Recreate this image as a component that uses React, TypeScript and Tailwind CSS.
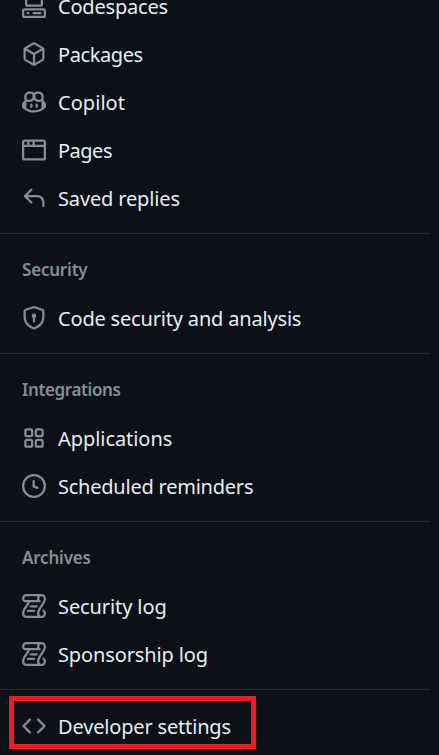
import React from "react";

const icons = {
  codespaces:
    "M0 11.25c0-.966.784-1.75 1.75-1.75h12.5c.966 0 1.75.784 1.75 1.75v3A1.75 1.75 0 0 1 14.25 16H1.75A1.75 1.75 0 0 1 0 14.25Zm2-9.5C2 .784 2.784 0 3.75 0h8.5C13.216 0 14 .784 14 1.75v5a1.75 1.75 0 0 1-1.75 1.75h-8.5A1.75 1.75 0 0 1 2 6.75Zm1.75-.25a.25.25 0 0 0-.25.25v5c0 .138.112.25.25.25h8.5a.25.25 0 0 0 .25-.25v-5a.25.25 0 0 0-.25-.25Zm-2 9.5a.25.25 0 0 0-.25.25v3c0 .138.112.25.25.25h12.5a.25.25 0 0 0 .25-.25v-3a.25.25 0 0 0-.25-.25ZM7 12.75a.75.75 0 0 1 .75-.75h4.5a.75.75 0 0 1 0 1.5h-4.5a.75.75 0 0 1-.75-.75Zm-4 0a.75.75 0 0 1 .75-.75h.5a.75.75 0 0 1 0 1.5h-.5a.75.75 0 0 1-.75-.75Z",
  package:
    "m8.878.392 5.25 3.045c.54.314.872.89.872 1.514v6.098a1.75 1.75 0 0 1-.872 1.514l-5.25 3.045a1.75 1.75 0 0 1-1.756 0l-5.25-3.045A1.75 1.75 0 0 1 1 11.049V4.951c0-.624.332-1.201.872-1.514L7.122.392a1.75 1.75 0 0 1 1.756 0ZM7.875 1.69l-4.63 2.685L8 7.133l4.755-2.758-4.63-2.685a.248.248 0 0 0-.25 0ZM2.5 5.677v5.372c0 .09.047.171.125.216l4.625 2.683V8.432Zm6.25 8.271 4.625-2.683a.25.25 0 0 0 .125-.216V5.677L8.75 8.432Z",
  copilot:
    "M7.998 15.035c-4.562 0-7.873-2.914-7.998-3.749V9.338c.085-.628.677-1.686 1.588-2.065.013-.07.024-.143.036-.218.029-.183.06-.384.126-.612-.201-.508-.254-1.084-.254-1.656 0-.87.128-1.769.693-2.484.579-.733 1.494-1.124 2.724-1.261 1.206-.134 2.262.034 2.944.765.05.053.096.108.139.165.044-.057.094-.112.143-.165.682-.731 1.738-.899 2.944-.765 1.23.137 2.145.528 2.724 1.261.566.715.693 1.614.693 2.484 0 .572-.053 1.148-.254 1.656.066.228.098.429.126.612.012.076.024.148.037.218.924.385 1.522 1.471 1.591 2.095v1.872c0 .766-3.351 3.795-8.002 3.795Zm0-1.485c2.28 0 4.584-1.11 5.002-1.433V7.862l-.023-.116c-.49.21-1.075.291-1.727.291-1.146 0-2.059-.327-2.71-.991A3.222 3.222 0 0 1 8 6.303a3.24 3.24 0 0 1-.544.743c-.65.664-1.563.991-2.71.991-.652 0-1.236-.081-1.727-.291l-.023.116v4.255c.419.323 2.722 1.433 5.002 1.433ZM6.762 2.83c-.193-.206-.637-.413-1.682-.297-1.019.113-1.479.404-1.713.7-.247.312-.369.789-.369 1.554 0 .793.129 1.171.308 1.371.162.181.519.379 1.442.379.853 0 1.339-.235 1.638-.54.315-.322.527-.827.617-1.553.117-.935-.037-1.395-.241-1.614Zm4.155-.297c-1.044-.116-1.488.091-1.681.297-.204.219-.359.679-.242 1.614.091.726.303 1.231.618 1.553.299.305.784.54 1.638.54.922 0 1.28-.198 1.442-.379.179-.2.308-.578.308-1.371 0-.765-.123-1.242-.37-1.554-.233-.296-.693-.587-1.713-.7ZM6.25 9.037a.75.75 0 0 1 .75.75v1.501a.75.75 0 0 1-1.5 0V9.787a.75.75 0 0 1 .75-.75Zm4.25.75v1.501a.75.75 0 0 1-1.5 0V9.787a.75.75 0 0 1 1.5 0Z",
  browser:
    "M0 2.75C0 1.784.784 1 1.75 1h12.5c.966 0 1.75.784 1.75 1.75v10.5A1.75 1.75 0 0 1 14.25 15H1.75A1.75 1.75 0 0 1 0 13.25ZM14.5 6h-13v7.25c0 .138.112.25.25.25h12.5a.25.25 0 0 0 .25-.25Zm-6-3.5v2h6V2.75a.25.25 0 0 0-.25-.25ZM5 2.5v2h2v-2Zm-3.25 0a.25.25 0 0 0-.25.25V4.5h2v-2Z",
  reply:
    "M6.78 1.97a.75.75 0 0 1 0 1.06L3.81 6h6.44A4.75 4.75 0 0 1 15 10.75v2.5a.75.75 0 0 1-1.5 0v-2.5a3.25 3.25 0 0 0-3.25-3.25H3.81l2.97 2.97a.749.749 0 0 1-.326 1.275.749.749 0 0 1-.734-.215L1.47 7.28a.75.75 0 0 1 0-1.06l4.25-4.25a.75.75 0 0 1 1.06 0Z",
  shield:
    "m8.533.133 5.25 1.68A1.75 1.75 0 0 1 15 3.48V7c0 1.566-.32 3.182-1.303 4.682-.983 1.498-2.585 2.813-5.032 3.855a1.697 1.697 0 0 1-1.33 0c-2.447-1.042-4.049-2.357-5.032-3.855C1.32 10.182 1 8.566 1 7V3.48a1.755 1.755 0 0 1 1.217-1.667l5.25-1.68a1.748 1.748 0 0 1 1.066 0Zm-.61 1.429.001.001-5.25 1.68a.251.251 0 0 0-.174.237V7c0 1.36.275 2.666 1.057 3.859.784 1.194 2.121 2.342 4.366 3.298a.196.196 0 0 0 .154 0c2.245-.957 3.582-2.103 4.366-3.297C13.225 9.666 13.5 8.358 13.5 7V3.48a.25.25 0 0 0-.174-.238l-5.25-1.68a.25.25 0 0 0-.153 0ZM9.5 6.5c0 .536-.286 1.032-.75 1.3v2.45a.75.75 0 0 1-1.5 0V7.8A1.5 1.5 0 1 1 9.5 6.5Z",
  apps:
    "M1.5 3.25c0-.966.784-1.75 1.75-1.75h2.5c.966 0 1.75.784 1.75 1.75v2.5A1.75 1.75 0 0 1 5.75 7.5h-2.5A1.75 1.75 0 0 1 1.5 5.75Zm7 0c0-.966.784-1.75 1.75-1.75h2.5c.966 0 1.75.784 1.75 1.75v2.5a1.75 1.75 0 0 1-1.75 1.75h-2.5A1.75 1.75 0 0 1 8.5 5.75Zm-7 7c0-.966.784-1.75 1.75-1.75h2.5c.966 0 1.75.784 1.75 1.75v2.5a1.75 1.75 0 0 1-1.75 1.75h-2.5a1.75 1.75 0 0 1-1.75-1.75Zm7 0c0-.966.784-1.75 1.75-1.75h2.5c.966 0 1.75.784 1.75 1.75v2.5a1.75 1.75 0 0 1-1.75 1.75h-2.5a1.75 1.75 0 0 1-1.75-1.75ZM3.25 3a.25.25 0 0 0-.25.25v2.5c0 .138.112.25.25.25h2.5A.25.25 0 0 0 6 5.75v-2.5A.25.25 0 0 0 5.75 3Zm7 0a.25.25 0 0 0-.25.25v2.5c0 .138.112.25.25.25h2.5a.25.25 0 0 0 .25-.25v-2.5a.25.25 0 0 0-.25-.25Zm-7 7a.25.25 0 0 0-.25.25v2.5c0 .138.112.25.25.25h2.5a.25.25 0 0 0 .25-.25v-2.5a.25.25 0 0 0-.25-.25Zm7 0a.25.25 0 0 0-.25.25v2.5c0 .138.112.25.25.25h2.5a.25.25 0 0 0 .25-.25v-2.5a.25.25 0 0 0-.25-.25Z",
  clock:
    "M8 0a8 8 0 1 1 0 16A8 8 0 0 1 8 0ZM1.5 8a6.5 6.5 0 1 0 13 0 6.5 6.5 0 0 0-13 0Zm7-3.25v2.992l2.028.812a.75.75 0 0 1-.557 1.392l-2.5-1A.751.751 0 0 1 7 8.25v-3.5a.75.75 0 0 1 1.5 0Z",
  log:
    "M5 8.25a.75.75 0 0 1 .75-.75h4a.75.75 0 0 1 0 1.5h-4A.75.75 0 0 1 5 8.25ZM4 10.5A.75.75 0 0 0 4 12h4a.75.75 0 0 0 0-1.5H4ZM13-.005c1.654 0 3 1.328 3 3 0 .982-.338 1.933-.783 2.818-.443.879-1.028 1.758-1.582 2.588l-.011.017c-.568.853-1.104 1.659-1.501 2.446-.398.789-.623 1.494-.623 2.136a1.5 1.5 0 1 0 2.333-1.248.75.75 0 0 1 .834-1.246A3 3 0 0 1 13 16H3a3 3 0 0 1-3-3c0-1.582.891-3.135 1.777-4.506.209-.322.418-.637.623-.946.473-.709.923-1.386 1.287-2.048H2.51c-.576 0-1.381-.133-1.907-.783A2.68 2.68 0 0 1 0 2.995a3 3 0 0 1 3-3Zm0 1.5a1.5 1.5 0 0 0-1.5 1.5c0 .476.223.834.667 1.132A.75.75 0 0 1 11.75 5.5H5.368c-.467 1.003-1.141 2.015-1.773 2.963-.192.289-.381.571-.558.845C2.13 10.711 1.5 11.916 1.5 13A1.5 1.5 0 0 0 3 14.5h7.401A2.989 2.989 0 0 1 10 13c0-.979.338-1.928.784-2.812.441-.874 1.023-1.748 1.575-2.576l.017-.026c.568-.853 1.103-1.658 1.501-2.448.398-.79.623-1.497.623-2.143 0-.838-.669-1.5-1.5-1.5Zm-10 0a1.5 1.5 0 0 0-1.5 1.5c0 .321.1.569.27.778.097.12.325.227.74.227h7.674A2.737 2.737 0 0 1 10 2.995c0-.546.146-1.059.401-1.5Z",
  code:
    "m11.28 3.22 4.25 4.25a.75.75 0 0 1 0 1.06l-4.25 4.25a.749.749 0 0 1-1.275-.326.749.749 0 0 1 .215-.734L13.94 8l-3.72-3.72a.749.749 0 0 1 .326-1.275.749.749 0 0 1 .734.215Zm-6.56 0a.751.751 0 0 1 1.042.018.751.751 0 0 1 .018 1.042L2.06 8l3.72 3.72a.749.749 0 0 1-.326 1.275.749.749 0 0 1-.734-.215L.47 8.53a.75.75 0 0 1 0-1.06Z",
};

type IconName = keyof typeof icons;

function Item({ icon, label, spacing }: { icon: IconName; label: string; spacing: string }) {
  return (
    <li className="flex h-12 items-center gap-3 pl-[22px]">
      <svg viewBox="0 0 16 16" className="size-6 shrink-0 overflow-visible fill-[#848d97]" aria-hidden="true">
        <path d={icons[icon]} />
      </svg>
      <span className={`whitespace-nowrap pt-0.5 text-[20px] leading-8 ${spacing}`}>{label}</span>
    </li>
  );
}

function Divider() {
  return <hr className="mr-[9px] mt-[11px] h-px border-0 bg-[#262b33]" />;
}

function Section({ title, spacing, children }: { title: string; spacing: string; children: React.ReactNode }) {
  return (
    <section>
      <Divider />
      <h3 className={`flex h-[60px] items-center pb-px pt-3 pl-[22px] text-[17px] font-semibold leading-6 text-[#848d97] ${spacing}`}>
        <span>{title}</span>
      </h3>
      <ul>{children}</ul>
    </section>
  );
}

export default function App() {
  return (
    <nav className="relative h-[755px] w-[439px] overflow-hidden bg-[#0d1117] font-['Noto_Sans',sans-serif] text-[#e6edf3]">
      <ul className="-mt-[18px]">
        <Item icon="codespaces" label="Codespaces" spacing="tracking-[-0.2px]" />
        <Item icon="package" label="Packages" spacing="tracking-[-0.4px]" />
        <Item icon="copilot" label="Copilot" spacing="tracking-[0.05px]" />
        <Item icon="browser" label="Pages" spacing="tracking-[-0.5px]" />
        <Item icon="reply" label="Saved replies" spacing="tracking-[-0.15px]" />
      </ul>
      <Section title="Security" spacing="tracking-[-0.2px]">
        <Item icon="shield" label="Code security and analysis" spacing="tracking-[-0.18px]" />
      </Section>
      <Section title="Integrations" spacing="tracking-[-0.37px]">
        <Item icon="apps" label="Applications" spacing="tracking-[-0.06px]" />
        <Item icon="clock" label="Scheduled reminders" spacing="tracking-[-0.23px]" />
      </Section>
      <Section title="Archives" spacing="tracking-[-0.2px]">
        <Item icon="log" label="Security log" spacing="tracking-[-0.1px]" />
        <Item icon="log" label="Sponsorship log" spacing="tracking-[-0.13px]" />
      </Section>
      <Divider />
      <ul className="pt-3">
        <Item icon="code" label="Developer settings" spacing="tracking-[-0.17px]" />
      </ul>
      {/* Highlight frame over the last entry */}
      <div className="absolute left-[9px] top-[696px] h-[53px] w-[247px] border-5 border-[#ed1c24]" />
    </nav>
  );
}
